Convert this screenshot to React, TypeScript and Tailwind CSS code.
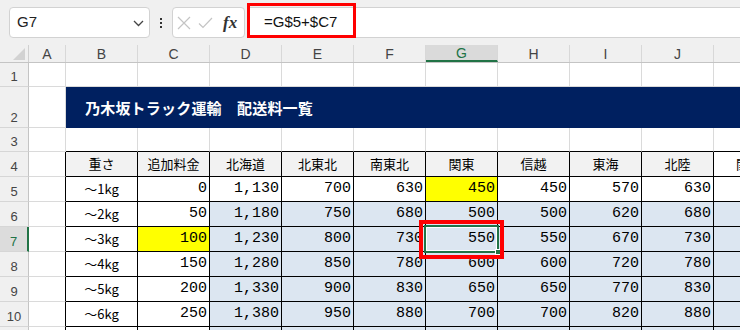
import React from 'react';
import clsx from 'clsx';

const colW = [
  'w-[37px]', 'w-[72px]', 'w-[72px]', 'w-[72px]', 'w-[72px]', 'w-[72px]',
  'w-[72px]', 'w-[72px]', 'w-[72px]', 'w-[72px]', 'w-[80px]',
];
const letters = ['A', 'B', 'C', 'D', 'E', 'F', 'G', 'H', 'I', 'J', 'K'];

const headers = ['重さ', '追加料金', '北海道', '北東北', '南東北', '関東', '信越', '東海', '北陸', '関西'];

const rows: { n: number; w: string; v: string[] }[] = [
  { n: 5, w: '～1kg', v: ['0', '1,130', '700', '630', '450', '450', '570', '630'] },
  { n: 6, w: '～2kg', v: ['50', '1,180', '750', '680', '500', '500', '620', '680'] },
  { n: 7, w: '～3kg', v: ['100', '1,230', '800', '730', '550', '550', '670', '730'] },
  { n: 8, w: '～4kg', v: ['150', '1,280', '850', '780', '600', '600', '720', '780'] },
  { n: 9, w: '～5kg', v: ['200', '1,330', '900', '830', '650', '650', '770', '830'] },
  { n: 10, w: '～6kg', v: ['250', '1,380', '950', '880', '700', '700', '820', '880'] },
];

function RowHead({ n, active }: { n?: number; active?: boolean }) {
  return (
    <div
      className={clsx(
        'w-[29px] shrink-0 flex items-end justify-center pb-[3px] font-["Liberation_Sans",sans-serif] text-[13px] leading-none border-b border-b-[#d6d6d6]',
        active
          ? 'bg-[#dcdcdc] text-[#217346] border-r-2 border-r-[#217346]'
          : 'bg-[#f0f0f0] text-[#444] border-r border-r-[#c4c4c4]'
      )}
    >
      {n}
    </div>
  );
}

function Cell({ col, className, children }: { col: number; className?: string; children?: React.ReactNode }) {
  return (
    <div className={clsx(colW[col], 'shrink-0 border-r border-b border-[#dadada] flex items-center whitespace-nowrap', className)}>
      {children}
    </div>
  );
}

function PlainRow({ n, h, tableTop }: { n: number; h: string; tableTop?: boolean }) {
  return (
    <div className={clsx('flex', h)}>
      <RowHead n={n} />
      {letters.map((_, i) => (
        <Cell key={i} col={i} className={clsx(tableTop && i > 0 && 'border-b-black')} />
      ))}
    </div>
  );
}

export default function App() {
  return (
    <div className="relative w-[740px] h-[330px] overflow-hidden bg-white font-['Noto_Sans_CJK_JP',sans-serif] text-[13px] text-black">
      {/* ribbon edge */}
      <div className="h-[7px] bg-[#f0f0f0]" />

      {/* formula bar */}
      <div className="flex h-[31px] bg-[#f0f0f0] items-stretch">
        <div className="ml-[9px] w-[141px] rounded-[4px] border border-[#d2d2d2] bg-white flex items-center justify-between pl-[7px] pr-[5px]">
          <span className="font-['Liberation_Sans',sans-serif] text-[15px] text-[#222]">G7</span>
          <svg width="11" height="7" viewBox="0 0 11 7" className="mt-[1px]">
            <path d="M1 1 L5.5 5.5 L10 1" fill="none" stroke="#444" strokeWidth="1.3" />
          </svg>
        </div>
        <div className="w-[22px] flex flex-col items-center justify-center gap-[2px]">
          <span className="w-[2px] h-[2px] bg-[#333]" />
          <span className="w-[2px] h-[2px] bg-[#333]" />
          <span className="w-[2px] h-[2px] bg-[#333]" />
        </div>
        <div className="w-[73px] rounded-[4px] border border-[#d2d2d2] bg-white flex items-center pl-[4px] gap-[7px]">
          <svg width="14" height="14" viewBox="0 0 14 14">
            <path d="M1 1 L13 13 M13 1 L1 13" stroke="#c4c4c4" strokeWidth="1.2" />
          </svg>
          <svg width="15" height="12" viewBox="0 0 15 12">
            <path d="M1 6.5 L5 10.5 L14 1" fill="none" stroke="#c4c4c4" strokeWidth="1.2" />
          </svg>
          <span className="font-['Liberation_Serif',serif] italic font-bold text-[17px] text-[#333] leading-none ml-[3px]">fx</span>
        </div>
        <div className="flex-1 ml-[2px] bg-white border-y border-[#d2d2d2] flex items-center pl-[17px]">
          <span className="font-['Liberation_Sans',sans-serif] text-[15px] text-[#111]">=G$5+$C7</span>
        </div>
      </div>

      <div className="h-[7px] bg-[#f0f0f0]" />

      {/* column headers */}
      <div className="flex h-[18px] bg-[#f0f0f0] border-b border-[#c4c4c4] font-['Liberation_Sans',sans-serif] text-[14px] text-[#444]">
        <div className="w-[29px] shrink-0 border-r border-[#d0d0d0] relative">
          <svg width="12" height="12" viewBox="0 0 12 12" className="absolute right-[3px] bottom-[2px]">
            <path d="M12 0 L12 12 L0 12 Z" fill="#d2d2d2" />
          </svg>
        </div>
        {letters.map((l, i) => (
          <div
            key={l}
            className={clsx(
              colW[i],
              'shrink-0 flex items-center justify-center border-r border-[#d8d8d8] leading-none pt-[1px]',
              l === 'G' && 'bg-[#dadada] text-[#217346] border-b-2 border-b-[#217346]'
            )}
          >
            {l}
          </div>
        ))}
      </div>

      <PlainRow n={1} h="h-[24px]" />

      {/* title band */}
      <div className="flex h-[41px]">
        <RowHead n={2} />
        <Cell col={0} />
        <div className="flex-1 bg-[#002060] flex items-center pl-[19px] pt-[1px]">
          <span className="text-white font-bold text-[15px] tracking-[0.2px]">乃木坂トラック運輸　配送料一覧</span>
        </div>
      </div>

      <PlainRow n={3} h="h-[24px]" tableTop />

      {/* table header */}
      <div className="flex h-[25px]">
        <RowHead n={4} />
        <Cell col={0} className="border-r-black" />
        {headers.map((t, i) => (
          <Cell
            key={t}
            col={i + 1}
            className={clsx('border-black justify-center', i < 9 ? 'bg-[#f2f2f2]' : 'bg-white justify-start pl-[22px]')}
          >
            {t}
          </Cell>
        ))}
      </div>

      {rows.map((r) => (
        <div key={r.n} className="flex h-[25px]">
          <RowHead n={r.n} active={r.n === 7} />
          <Cell col={0} className="border-r-black" />
          <Cell col={1} className="border-black justify-center bg-white">{r.w}</Cell>
          {r.v.map((v, i) => {
            const col = i + 2;
            const yellow = (r.n === 5 && col === 6) || (r.n === 7 && col === 2);
            const blue = r.n > 5 && col > 2;
            const active = r.n === 7 && col === 6;
            return (
              <Cell
                key={col}
                col={col}
                className={clsx(
                  'border-black justify-end pr-[2px] font-["Liberation_Mono",monospace] text-[15px] pt-[1px]',
                  active && 'relative',
                  yellow ? 'bg-[#ffff00]' : blue ? 'bg-[#dce6f1]' : 'bg-white'
                )}
              >
                {v}
                {active && (
                  <>
                    <div className="absolute -left-[2px] -top-[2px] -right-[2px] -bottom-[2px] border-2 border-[#217346] z-[5]">
                      <div className="w-full h-full border border-white" />
                    </div>
                    <div className="absolute -right-[4px] -bottom-[4px] w-[6px] h-[6px] bg-[#217346] border border-white z-[6]" />
                    <div className="absolute -left-[7px] -top-[7px] -right-[7px] -bottom-[8px] border-[4px] border-[#ff0000] z-10" />
                  </>
                )}
              </Cell>
            );
          })}
          <Cell col={10} className={clsx('border-black', r.n > 5 ? 'bg-[#dce6f1]' : 'bg-white')} />
        </div>
      ))}

      {/* row 11 (partly visible) */}
      <div className="flex h-[25px]">
        <RowHead />
        <Cell col={0} className="border-r-black" />
        {letters.slice(1).map((l, i) => (
          <Cell key={l} col={i + 1} className={clsx('border-black', i > 1 ? 'bg-[#dce6f1]' : 'bg-white')} />
        ))}
      </div>

      {/* highlight on the formula */}
      <div className="absolute left-[247px] top-[3px] w-[109px] h-[35px] border-[3px] border-[#ff0000]" />
    </div>
  );
}
